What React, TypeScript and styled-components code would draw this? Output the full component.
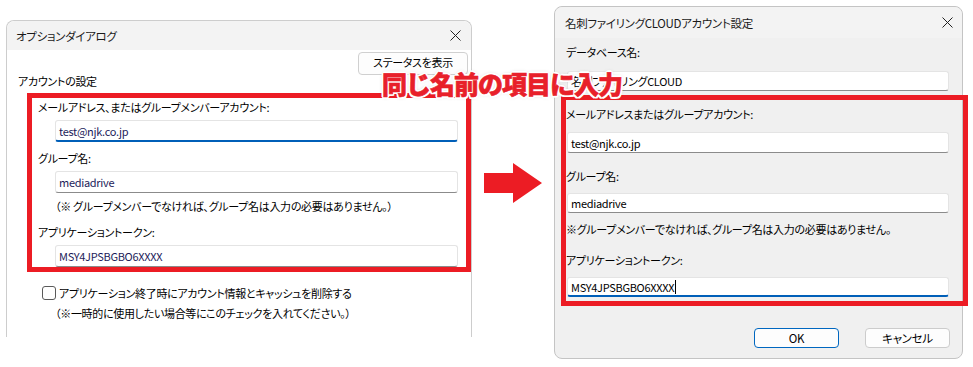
import React from "react";
import styled, { createGlobalStyle } from "styled-components";

const GlobalStyle = createGlobalStyle`
  html, body { margin: 0; padding: 0; background: #fff; }
  body {
    font-family: "Noto Sans CJK JP", "Noto Sans", sans-serif;
    font-size: 11px;
    letter-spacing: -0.3px;
    color: #000;
    font-feature-settings: "palt" 1;
  }
  * { box-sizing: border-box; }
`;

const RED = "#ec1c24";

const Page = styled.div`
  position: relative;
  width: 973px;
  height: 367px;
  overflow: hidden;
  background: #fff;
  display: flex;
  align-items: flex-start;
`;

const LeftDialog = styled.section`
  margin: 20px 0 0 6px;
  width: 466px;
  height: 317px;
  border: 1px solid #cdcdcd;
  border-bottom: none;
  border-radius: 8px 8px 0 0;
  background: #fff;
  display: flex;
  flex-direction: column;
`;

const RightDialog = styled.section`
  margin: 6px 0 0 12px;
  width: 409px;
  height: 353px;
  border: 1px solid #c4c4c4;
  border-radius: 8px;
  background: #f0f0f0;
  display: flex;
  flex-direction: column;
  overflow: visible;
`;

const TitleBar = styled.header<{ $h: number; $pl: number; $pr: number; $bg: string }>`
  flex: none;
  height: ${(p) => p.$h}px;
  padding: 0 ${(p) => p.$pr}px 0 ${(p) => p.$pl}px;
  background: ${(p) => p.$bg};
  border-radius: 8px 8px 0 0;
  display: flex;
  align-items: center;
  justify-content: space-between;
  color: #1a1a1a;
  font-size: 11.5px;
`;

const LeftBody = styled.div`
  padding: 2px 3px 0 11px;
  display: flex;
  flex-direction: column;
`;

const RightBody = styled.div`
  padding: 6px 13px 0 11px;
  display: flex;
  flex-direction: column;
`;

const HeaderRow = styled.div`
  display: flex;
  justify-content: space-between;
  align-items: flex-start;
`;

const SectionTitle = styled.div`
  margin-top: 21px;
  line-height: 16px;
`;

const StatusButton = styled.div`
  width: 110px;
  height: 23px;
  border: 1px solid #d0d0d0;
  border-radius: 4px;
  background: #fdfdfd;
  text-align: center;
  line-height: 19px;
`;

const RedBox = styled.div`
  border: 5px solid ${RED};
  display: flex;
  flex-direction: column;
`;

const LeftRedBox = styled(RedBox)`
  margin: 4px -3px 0 9px;
  padding: 1px 8px 0 6px;
`;

const RightRedBox = styled(RedBox)`
  margin: 4px -19px 0 -5px;
  padding: 6px 14px 4px 0;
`;

const Label = styled.div<{ $mt?: number; $ml?: number }>`
  margin-top: ${(p) => p.$mt ?? 0}px;
  margin-left: ${(p) => p.$ml ?? 0}px;
  line-height: 16px;
  white-space: nowrap;
`;

const TextBox = styled.div<{ $mt: number; $ml: number; $h: number; $focused?: boolean; $ink?: string }>`
  margin-top: ${(p) => p.$mt}px;
  margin-left: ${(p) => p.$ml}px;
  height: ${(p) => p.$h}px;
  background: #fff;
  border: 1px solid #e4e4e4;
  border-bottom: ${(p) => (p.$focused ? "2px solid #005fb8" : "1px solid #8b8b8b")};
  border-radius: 3px;
  padding-left: 3px;
  display: flex;
  align-items: center;
  color: ${(p) => p.$ink ?? "#000"};
  white-space: nowrap;
`;

const Caret = styled.span`
  display: inline-block;
  width: 1px;
  height: 14px;
  background: #000;
  margin-left: 1px;
`;

const CheckRow = styled.div`
  margin: 13px 0 0 24px;
  display: flex;
  align-items: center;
  gap: 3px;
  line-height: 16px;
`;

const CheckBox = styled.span`
  width: 14px;
  height: 14px;
  border: 1px solid #5a5a5a;
  border-radius: 3px;
  background: #fff;
  flex: none;
`;

const ButtonRow = styled.div`
  margin: 22px -1px 0 0;
  display: flex;
  justify-content: flex-end;
  gap: 26px;
`;

const DialogButton = styled.div<{ $primary?: boolean }>`
  width: 85px;
  height: 20px;
  border: ${(p) => (p.$primary ? "1.5px solid #0067c0" : "1px solid #cccccc")};
  border-radius: 4px;
  background: #fdfdfd;
  text-align: center;
  line-height: 18px;
  font-size: 11.5px;
`;

const Arrow = styled.svg`
  flex: none;
  margin: 163px 0 0 12px;
`;

const Callout = styled.div`
  position: absolute;
  left: 382px;
  top: 68px;
  font-size: 25px;
  line-height: 30px;
  font-weight: 900;
  letter-spacing: -1px;
  color: #e8202a;
  font-feature-settings: normal;
  white-space: nowrap;
  -webkit-text-stroke: 0.6px #e8202a;
  text-shadow:
    2px 0 0 #fff, -2px 0 0 #fff, 0 2px 0 #fff, 0 -2px 0 #fff,
    1.5px 1.5px 0 #fff, -1.5px 1.5px 0 #fff, 1.5px -1.5px 0 #fff, -1.5px -1.5px 0 #fff,
    0 0 4px rgba(0, 0, 0, 0.25);
`;

const CloseIcon = () => (
  <svg width="11" height="11" viewBox="0 0 11 11">
    <path d="M0.5 0.5 L10.5 10.5 M10.5 0.5 L0.5 10.5" stroke="#222" strokeWidth="1" />
  </svg>
);

const LEFT_INK = "#1c1c5a";

export default function App() {
  return (
    <>
      <GlobalStyle />
      <Page>
        <LeftDialog>
          <TitleBar $h={29} $pl={9} $pr={10} $bg="#f3f3f3">
            <span>オプションダイアログ</span>
            <CloseIcon />
          </TitleBar>
          <LeftBody>
            <HeaderRow>
              <SectionTitle>アカウントの設定</SectionTitle>
              <StatusButton>ステータスを表示</StatusButton>
            </HeaderRow>
            <LeftRedBox>
              <Label>メールアドレス、またはグループメンバーアカウント:</Label>
              <TextBox $mt={5} $ml={17} $h={22} $focused $ink={LEFT_INK}>test@njk.co.jp</TextBox>
              <Label $mt={8}>グループ名:</Label>
              <TextBox $mt={5} $ml={17} $h={22} $ink={LEFT_INK}>mediadrive</TextBox>
              <Label $mt={5} $ml={17}>（※ グループメンバーでなければ、グループ名は入力の必要はありません。）</Label>
              <Label $mt={10}>アプリケーショントークン:</Label>
              <TextBox $mt={5} $ml={17} $h={22} $ink={LEFT_INK}>MSY4JPSBGBO6XXXX</TextBox>
            </LeftRedBox>
            <CheckRow>
              <CheckBox />
              <span>アプリケーション終了時にアカウント情報とキャッシュを削除する</span>
            </CheckRow>
            <Label $mt={4} $ml={37}>（※一時的に使用したい場合等にこのチェックを入れてください。）</Label>
          </LeftBody>
        </LeftDialog>

        <Arrow width="58" height="40" viewBox="0 0 58 40">
          <path d="M0 10 H29 V0 L58 20 L29 40 V30 H0 Z" fill={RED} />
        </Arrow>

        <RightDialog>
          <TitleBar $h={31} $pl={10} $pr={9} $bg="#f3f3f3">
            <span>名刺ファイリングCLOUDアカウント設定</span>
            <CloseIcon />
          </TitleBar>
          <RightBody>
            <Label>データベース名:</Label>
            <TextBox $mt={11} $ml={1} $h={20}>名刺ファイリングCLOUD</TextBox>
            <RightRedBox>
              <Label>メールアドレスまたはグループアカウント:</Label>
              <TextBox $mt={10} $ml={1} $h={21}>test@njk.co.jp</TextBox>
              <Label $mt={15}>グループ名:</Label>
              <TextBox $mt={9} $ml={1} $h={20}>mediadrive</TextBox>
              <Label $mt={8}>※グループメンバーでなければ、グループ名は入力の必要はありません。</Label>
              <Label $mt={15}>アプリケーショントークン:</Label>
              <TextBox $mt={9} $ml={1} $h={20} $focused>
                MSY4JPSBGBO6XXXX
                <Caret />
              </TextBox>
            </RightRedBox>
            <ButtonRow>
              <DialogButton $primary>OK</DialogButton>
              <DialogButton>キャンセル</DialogButton>
            </ButtonRow>
          </RightBody>
        </RightDialog>

        <Callout>同じ名前の項目に入力</Callout>
      </Page>
    </>
  );
}
